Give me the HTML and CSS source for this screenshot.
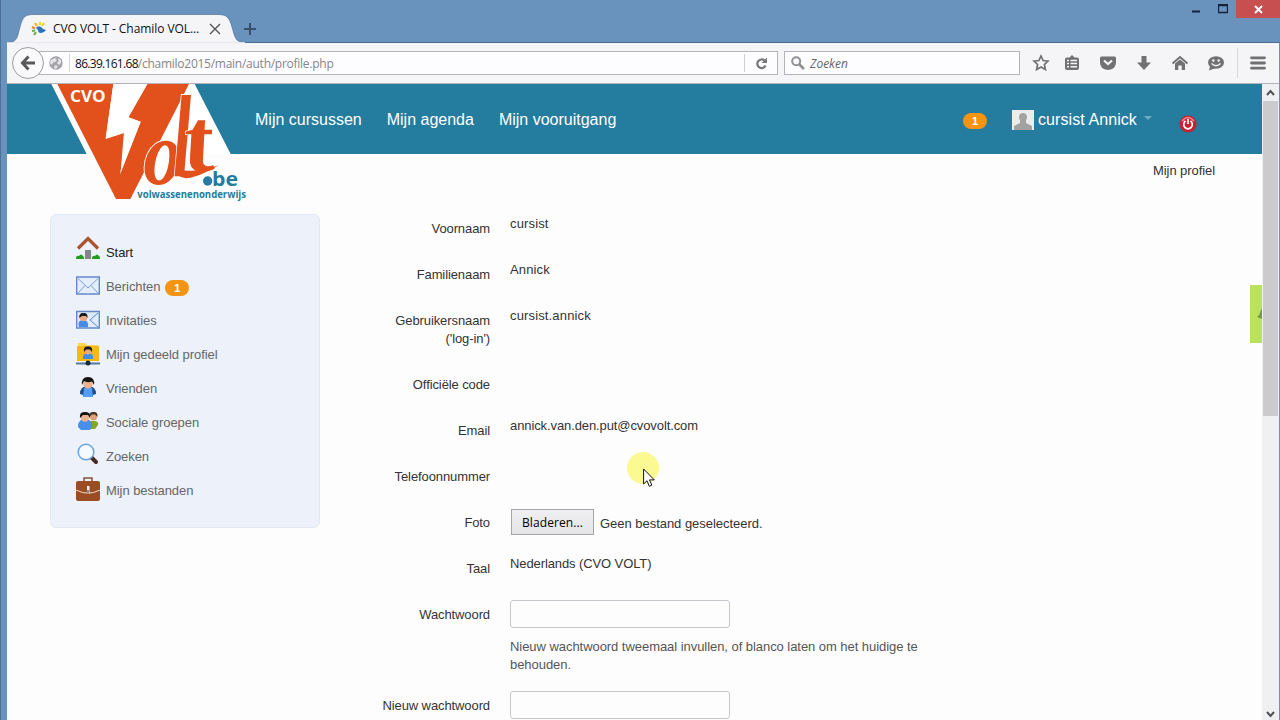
FILE: index.html
```html
<!DOCTYPE html>
<html lang="nl">
<head>
<meta charset="utf-8">
<title>CVO VOLT - Chamilo VOLT</title>
<link rel="stylesheet" href="styles.css">
</head>
<body>
<div class="window">
  <div class="titlebar">
    <svg class="tab-shape" width="240" height="30" viewBox="0 0 240 30"><path d="M0 29.500C11 29.500 10 24 13 14C16 3 18 1.500 28 1.500H210C220 1.500 222 4 225 14C228 24 228 29.500 238 29.500V30H0Z" fill="#f5f4f7" stroke="#4f7197" stroke-width=".7"/><path d="M0 30H238" stroke="#f5f4f7" stroke-width="1.500"/></svg>
    <div class="tab">
      <svg width="16" height="16" viewBox="0 0 16 16" fill="none" stroke-width="2.200"><path d="M5 7Q7 4 10 6Q11 8 15 9L13 11L10 12Q7 12 7 9Z" fill="#2875bd"/><path d="M1 6L4 7.500" stroke="#f08020"/><path d="M4 2L6 5" stroke="#f7b01e"/><path d="M9 1V4M13 2L11 5" stroke="#f7d21e"/><path d="M1 10L4 9.500M3 14L5 11" stroke="#65b244"/></svg>
      <span class="tab-title">CVO VOLT - Chamilo VOL...</span>
      <svg width="12" height="12" viewBox="0 0 12 12" stroke="#555" stroke-width="1.400"><path d="M1 1L11 11M11 1L1 11"/></svg>
    </div>
    <svg class="new-tab" width="12" height="12" viewBox="0 0 12 12" stroke="#38506c" stroke-width="2"><path d="M6 0V12M0 6H12"/></svg>
    <div class="win-controls">
      <svg width="9" height="12" viewBox="0 0 9 12"><path d="M0 8.500H8" stroke="#14233c" stroke-width="2"/></svg>
      <svg width="10" height="10" viewBox="0 0 10 10"><path d="M.5 .5H9.500V8.500H.5Z M0 1.500H10" fill="none" stroke="#14233c" stroke-width="1.300"/></svg>
      <div class="close"><svg width="9" height="9" viewBox="0 0 9 9" stroke="#fff" stroke-width="1.900"><path d="M1 1L8 8M8 1L1 8"/></svg></div>
    </div>
  </div>

  <div class="toolbar">
    <div class="back"><svg width="16" height="16" viewBox="0 0 16 16" fill="none" stroke="#59595c" stroke-width="3"><path d="M8.500 1.500L2.500 8L8.500 14.500M3 8H15"/></svg></div>
    <div class="url">
      <svg width="14" height="14" viewBox="0 0 14 14"><circle cx="7" cy="7" r="6.700" fill="#a4a4a8"/><path d="M2 4L6 2L8 4L6 6L4 6.500L3 9L1 7ZM9 2L12 4L12 7L10 9L8 7L9.500 5ZM6 9L9 10L7 13L5 12Z" fill="#e6e6e9"/></svg>
      <span class="address"><b>86.39.161.68</b>/chamilo2015/main/auth/profile.php</span>
      <span class="reload"><svg width="13" height="13" viewBox="0 0 13 13"><path d="M10.600 8.500A4.300 4.300 0 1 1 9.500 3.500" fill="none" stroke="#77777a" stroke-width="2.200"/><path d="M12 .5V6H6.500Z" fill="#77777a"/></svg></span>
    </div>
    <div class="search"><svg width="14" height="14" viewBox="0 0 14 14" fill="none" stroke="#929296" stroke-width="2"><circle cx="5.200" cy="5.200" r="4"/><path d="M8.200 8.200L13 13" stroke-width="2.700"/></svg><i>Zoeken</i></div>
    <div class="tools">
      <svg width="18" height="18" viewBox="0 0 18 18"><path d="M9 2L11.100 6.500L16 7.100L12.400 10.500L13.400 15.500L9 13L4.600 15.500L5.600 10.500L2 7.100L6.900 6.500Z" fill="none" stroke="#717174" stroke-width="1.700"/></svg>
      <svg class="clip" width="18" height="18" viewBox="0 0 18 18"><path d="M4 3.500H6.500L9 1L11.500 3.500H14Q16 3.500 16 5.500V14Q16 16 14 16H4Q2 16 2 14V5.500Q2 3.500 4 3.500Z" fill="#717174"/><path d="M4 6.500H6M7.500 6.500H14M4 9.500H6M7.500 9.500H14M4 12.800H6M7.500 12.800H14" stroke="#f5f4f7" stroke-width="1.600"/></svg>
      <svg width="18" height="18" viewBox="0 0 18 18"><path d="M2.500 2.500H15.500Q17 2.500 17 4V8Q17 15.500 9 16Q1 15.500 1 8V4Q1 2.500 2.500 2.500Z" fill="#717174"/><path d="M5 6.500L9 10L13 6.500" fill="none" stroke="#f5f4f7" stroke-width="2.200"/></svg>
      <svg width="18" height="18" viewBox="0 0 18 18"><path d="M6.500 2H11.500V8.500H16L9 16L2 8.500H6.500Z" fill="#717174"/></svg>
      <svg width="18" height="18" viewBox="0 0 18 18"><path d="M1.500 9.500L9 3L16.500 9.500" fill="none" stroke="#717174" stroke-width="2"/><path d="M4 9.500L9 5.500L14 9.500V16H10.700V11.500H7.300V16H4Z" fill="#717174"/></svg>
      <svg width="18" height="18" viewBox="0 0 18 18"><ellipse cx="9" cy="8.500" rx="8" ry="6.200" fill="#717174"/><path d="M3 12L2 16.500L9 14Z" fill="#717174"/><circle cx="6.300" cy="6.500" r="1.200" fill="#f5f4f7"/><circle cx="11.700" cy="6.500" r="1.200" fill="#f5f4f7"/><path d="M4.500 9.500Q9 14 13.500 9.500" fill="none" stroke="#f5f4f7" stroke-width="1.300"/></svg>
      <span class="menu"><svg width="16" height="14" viewBox="0 0 16 14" stroke="#717174" stroke-width="2.800" stroke-linecap="round"><path d="M1.500 1.800H14.500M1.500 7H14.500M1.500 12.200H14.500"/></svg></span>
    </div>
  </div>

  <div class="viewport">
    <div class="page">
      <header class="header">
        <svg class="logo" width="220" height="126" viewBox="0 12 660 378">
          <path d="M34 12H464L572 222H342L330 258L290 330H215L140 222Z" fill="#fff"/>
          <path d="M52 12H220L197 175L252 155L242 276L302 125L265 112L322 12H447L271 357H228Z" fill="#e2501b"/>
          <path d="M220 12H322L265 112L302 125L240 284L262 156L197 177Z" fill="#fff"/>
          <g class="script" fill="#e2501b" stroke="#fff" stroke-width="6" paint-order="stroke">
            <text transform="translate(308 313) skewX(-2) scale(.84 1)" font-size="275">o</text>
            <text class="stem" transform="translate(399 288) scale(.7 1)" font-size="330">l</text>
            <text transform="translate(444 272) skewX(8) scale(1.100 1)" font-size="270" stroke-width="4">t</text>
          </g>
          <path d="M406 262Q410 330 536 256Q500 270 455 272Q425 274 406 262Z" fill="#e2501b"/>
          <text class="brand" x="90" y="66" font-size="49" fill="#fff" textLength="107" lengthAdjust="spacingAndGlyphs">CVO</text>
          <circle cx="503" cy="303" r="14" fill="#247c9e"/>
          <text class="brand" x="516" y="319" font-size="57" fill="#247c9e" textLength="78" lengthAdjust="spacingAndGlyphs">be</text>
          <text class="brand" x="292" y="353" font-size="32" fill="#247c9e" textLength="326" lengthAdjust="spacingAndGlyphs">volwassenenonderwijs</text>
        </svg>
        <nav class="nav"><a>Mijn cursussen</a><a>Mijn agenda</a><a>Mijn vooruitgang</a></nav>
        <div class="account">
          <span class="badge">1</span>
          <svg class="avatar" width="22" height="20" viewBox="0 0 22 20"><path d="M0 0H22V20H0Z" fill="#ececec"/><path d="M11 3C15 3 16 7 14 10.500V13L20 16V20H2V16L8 13V10.500C6 7 7 3 11 3Z" fill="#a2a2a2"/></svg>
          <span class="user">cursist Annick</span>
          <i class="caret"></i>
          <svg class="power" width="18" height="18" viewBox="0 0 18 18"><circle cx="9" cy="9" r="8.500" fill="#c91e2d"/><path d="M3 6Q9-1 15 6" fill="none" stroke="#e88790" stroke-width="1.500"/><path d="M6.500 6A4.300 4.300 0 1 0 11.500 6M9 4V9" fill="none" stroke="#fff" stroke-width="1.700"/></svg>
        </div>
      </header>
      <div class="crumb">Mijn profiel</div>
      <div class="columns">
        <aside class="sidebar">
          <a class="active"><svg class="raise" width="24" height="24" viewBox="0 0 24 24"><path d="M9 14H15V23H9Z" fill="#85858a"/><path d="M2 12.500L12 2.500L22 12.500" fill="none" stroke="#a9532f" stroke-width="3.200"/><path d="M0 23Q0 19 3 20Q5 17 7 20Q8 20 8 23ZM16 23Q16 19 19 20Q21 17 23 20Q24 20 24 23Z" fill="#239c20"/></svg>Start</a>
          <a><svg width="24" height="24" viewBox="0 0 24 24"><path d="M.7 3H23.300V20H.7Z" fill="#e3edfc" stroke="#6489cb" stroke-width="1.400"/><path d="M2 4.500L12 14L22 4.500M2 19L9 11.500M22 19L15 11.500" fill="none" stroke="#7d9dd6"/></svg>Berichten<span class="badge">1</span></a>
          <a><svg width="24" height="24" viewBox="0 0 24 24"><path d="M.7 3.500H23.300V20H.7Z" fill="#dfeafa" stroke="#6489cb" stroke-width="1.400"/><path d="M22 5L14 12L22 19" fill="none" stroke="#5e88d0"/><path d="M3 19Q1 12 7 12Q13 12 12 19Z" fill="#438de8"/><circle cx="7.500" cy="9.500" r="3.800" fill="#e9a782"/><path d="M3.200 10Q3 4.500 7.500 5Q12 4.500 11.500 10L10 8H6Z" fill="#161c22"/></svg>Invitaties</a>
          <a><svg width="24" height="24" viewBox="0 0 24 24"><path d="M2 1H9L11 3H22V18H2Z" fill="#ffd65c"/><path d="M1 4H23V19H1Z" fill="#f8b814"/><path d="M7 17Q6 11 12 11Q18 11 17 17Z" fill="#438de8"/><circle cx="12" cy="9" r="3.500" fill="#e9a782"/><path d="M8 10Q7 4 12 4.500Q17 4 16 10L14 7.500H10Z" fill="#161c22"/><path d="M0 21.500H24" stroke="#52779a" stroke-width="2"/><circle cx="12" cy="21" r="2.500" fill="#162c40"/></svg>Mijn gedeeld profiel</a>
          <a><svg width="24" height="24" viewBox="0 0 24 24"><path d="M4 18Q4 10 12 10Q20 10 20 18L17 19V21H7V19Z" fill="#204e8a"/><path d="M7 21L8 12H16L17 21Z" fill="#529df6"/><circle cx="12" cy="8" r="4.600" fill="#efb18b"/><path d="M6 9Q5 1 12 1Q19 1 18 9L16 5.500Q11 7 8 5Z" fill="#151515"/></svg>Vrienden</a>
          <a><svg width="24" height="24" viewBox="0 0 24 24"><path d="M12 17L14 11H18Q23 11 22 15L19 19H13Z" fill="#86a52a"/><circle cx="17.500" cy="7" r="3.500" fill="#dfa077"/><path d="M13 7Q13 1.500 17.500 2Q22 1.500 21.500 7L19 4.500H16Z" fill="#4a351d"/><path d="M2 17Q2 9 9 9Q16 9 16 17L14 20H5Z" fill="#478fe9"/><circle cx="9" cy="7.500" r="4.200" fill="#efb18b"/><path d="M4 8Q3 1.500 9 2Q15 1.500 14 8L12 5H7Z" fill="#151515"/></svg>Sociale groepen</a>
          <a><svg class="lens" width="24" height="24" viewBox="0 0 24 24"><path d="M15.500 14.500L20 19" stroke="#492a21" stroke-width="4" stroke-linecap="round"/><circle cx="10" cy="9" r="7.800" fill="#f6faff" stroke="#69a5e2" stroke-width="1.500"/></svg>Zoeken</a>
          <a><svg class="case" width="24" height="26" viewBox="0 0 24 26"><path d="M8 6V2H16V6" fill="none" stroke="#855239" stroke-width="1.500"/><rect x="0" y="5" width="24" height="20" rx="2" fill="#9a4d22"/><path d="M0 14Q6 17 12 17Q18 17 24 14" fill="none" stroke="#e4bba0" stroke-width="1.300"/><path d="M11 10H13.500V18H11Z" fill="#eee"/><path d="M12 14V18" stroke="#333"/></svg>Mijn bestanden</a>
        </aside>
        <form class="form">
          <div class="row"><label>Voornaam</label><span>cursist</span></div>
          <div class="row"><label>Familienaam</label><span>Annick</span></div>
          <div class="row"><label>Gebruikersnaam<br>('log-in')</label><span>cursist.annick</span></div>
          <div class="row"><label>Officiële code</label></div>
          <div class="row"><label>Email</label><span class="tight">annick.van.den.put@cvovolt.com</span></div>
          <div class="row"><label>Telefoonnummer</label></div>
          <div class="row photo"><label>Foto</label><div class="file"><button type="button">Bladeren...</button><span>Geen bestand geselecteerd.</span></div></div>
          <div class="row"><label>Taal</label><span class="tight">Nederlands (CVO VOLT)</span></div>
          <div class="row pass"><label>Wachtwoord</label><div><input type="password"><p>Nieuw wachtwoord tweemaal invullen, of blanco laten om het huidige te behouden.</p></div></div>
          <div class="row"><label>Nieuw wachtwoord</label><input type="password"></div>
        </form>
      </div>
      <div class="side-tab"><svg width="5" height="12" viewBox="0 0 5 12"><path d="M5 0L2 7L0 9L5 11Z" fill="#77993f"/></svg></div>
    </div>
    <div class="scrollbar">
      <svg width="15" height="17" viewBox="0 0 15 17"><path d="M4 11L7.500 7L11 11" fill="none" stroke="#505055" stroke-width="2"/></svg>
      <div class="thumb"></div>
      <svg class="down" width="15" height="17" viewBox="0 0 15 17"><path d="M4 9L7.500 13L11 9" fill="none" stroke="#505055" stroke-width="2"/></svg>
    </div>
  </div>
  <div class="pointer"><svg width="12" height="20" viewBox="0 0 12 20"><path d="M.6 1V16L4 12.700L6.300 18.300L8.800 17.200L6.500 11.900H11.300Z" fill="#fff" stroke="#111"/></svg></div>
</div>
</body>
</html>
```
FILE: styles.css
```css
* { box-sizing: border-box; }
body { margin: 0; overflow: hidden; font: 13px/18px "Liberation Sans", Arial, sans-serif; color: #333; }
svg { display: block; flex: none; }
.window { width: 1280px; height: 720px; background: #6992bd; padding-left: 7px; display: flex; flex-direction: column; position: relative; box-shadow: inset 1px 0 #4c7098; }
.titlebar { height: 43px; flex: none; display: flex; position: relative; border-bottom: 1px solid #4c6d94; }
.tab-shape { position: absolute; left: 0; top: 13px; }
.tab { position: relative; margin: 14px 0 0 24px; width: 190px; height: 28px; display: flex; align-items: center; padding-top: 1px; font: 12px/16px "Open Sans", "Noto Sans", sans-serif; color: #111; }
.tab-title { margin-left: 6px; width: 156px; white-space: nowrap; letter-spacing: -.07px; }
.new-tab { margin: 23px 0 0 23px; }
.win-controls { margin-left: auto; display: flex; height: 18px; }
.win-controls > svg { margin: 4px 8px 0 0; }
.win-controls > svg:first-child { margin: 3px 17px 0 0; }
.close { width: 44px; height: 18px; background: #c84f50; display: flex; align-items: center; justify-content: center; }

.toolbar { height: 41px; flex: none; background: #f5f4f7; border-bottom: 1px solid #b4b1b8; display: flex; align-items: center; font: 12px/16px "Open Sans", "Noto Sans", sans-serif; margin-right: 1px; }
.back { width: 32px; height: 32px; margin-left: 5px; border: 1px solid #9e9da2; border-radius: 50%; background: #f9f8fa; display: flex; align-items: center; justify-content: center; position: relative; z-index: 1; }
.url { margin-left: -5px; width: 739px; height: 24px; border: 1px solid #b4b3b9; background: #fdfcfe; display: flex; align-items: center; padding-left: 9px; }
.address { margin-left: 6px; border-left: 1px solid #d4d3d7; padding: 2px 0 0 5px; color: #85858a; letter-spacing: -.26px; }
.address b { color: #111; font-weight: 400; letter-spacing: -.7px; }
.reload { margin-left: auto; width: 33px; height: 18px; border-left: 1px solid #cfced3; display: flex; align-items: center; padding-left: 10px; }
.search { margin-left: 6px; width: 236px; height: 24px; border: 1px solid #b4b3b9; background: #fdfcfe; display: flex; align-items: center; padding-left: 6px; color: #66666a; }
.search i { margin-left: 5px; padding-top: 2px; }
.tools { margin-left: 12px; display: flex; align-items: center; gap: 18px; flex: 1; }
.tools .clip { margin-left: -5px; }
.menu { border-left: 1px solid #d8d7dc; height: 30px; padding-left: 12px; margin-left: -6px; display: flex; align-items: center; }

.viewport { flex: 1; display: flex; min-height: 0; }
.page { width: 1255px; background: #fefdfe; position: relative; overflow: hidden; }
.header { height: 70px; background: #247c9e; display: flex; padding-left: 33px; color: #fff; font-size: 16px; line-height: 20px; }
.logo { position: relative; }
.script { font-family: "Liberation Serif", serif; font-style: italic; font-weight: 700; }
.stem { font-family: Lato, sans-serif; }
.brand { font-family: "Open Sans", sans-serif; font-weight: 700; }
.nav { display: flex; gap: 25px; margin: 26px 0 0 -5px; }
.account { margin-left: auto; padding: 26px 65px 0 0; display: flex; }
.badge { width: 24px; height: 16px; border-radius: 8px; background: #f49410; color: #fff; font-size: 11px; line-height: 16px; font-weight: 700; text-align: center; }
.account .badge { margin: 3px 25px 0 0; }
.avatar { margin-right: 4px; }
.user { width: 99px; white-space: nowrap; letter-spacing: .08px; }
.caret { margin: 6px 27px 0 7px; height: 0; border: 4px solid transparent; border-top-color: #72aabf; border-bottom: 0; }
.power { margin-top: 5px; }
.crumb { height: 60px; padding: 8px 47px 0 0; text-align: right; letter-spacing: -.07px; }
.columns { display: flex; padding-left: 43px; align-items: flex-start; }
.sidebar { width: 270px; height: 314px; background: #edf1fa; border: 1px solid #e2e9f5; border-radius: 6px; padding: 20px 25px; display: flex; flex-direction: column; color: #666; letter-spacing: -.06px; }
.sidebar a { height: 34px; display: flex; align-items: center; gap: 6px; white-space: nowrap; padding-top: 2px; }
.sidebar a > svg { margin-top: -2px; }
.sidebar a > .raise { margin-top: -10px; }
.sidebar a > .lens { margin-top: -5px; }
.sidebar a > .case { margin-top: -4px; }
.sidebar .badge { margin: 2px 0 0 -1px; }
.sidebar .active { color: #222; }
.form { margin-left: 20px; width: 600px; }
.row { display: grid; grid-template-columns: 150px 410px; column-gap: 20px; align-items: start; margin-bottom: 23px; }
.row label { padding-top: 6px; margin-bottom: -1px; text-align: right; white-space: nowrap; letter-spacing: -.1px; }
.row > span { padding-top: 1px; letter-spacing: .15px; }
.row > .tight { letter-spacing: -.1px; }
.photo { height: 23px; }
.file { display: flex; align-items: center; height: 28px; gap: 6px; padding-left: 1px; }
.file span { white-space: nowrap; padding-top: 3px; letter-spacing: -.03px; }
button { width: 83px; height: 26px; margin-top: -1px; padding: 3px 0 0; border: 1px solid #a5a4a8; background: linear-gradient(#f0eff1, #e4e3e6); font: 12px/18px "Open Sans", "Noto Sans", sans-serif; letter-spacing: .1px; color: #000; }
input { display: block; width: 220px; height: 28px; border: 1px solid #c8c6cd; border-radius: 3px; background: #fefdfe; padding: 0; }
.row p { margin: 10px 0 -1px; color: #555; letter-spacing: -.05px; }
.pass { margin-bottom: 18px; }
.side-tab { position: absolute; right: 0; top: 201px; width: 12px; height: 58px; background: #b9e35d; display: flex; align-items: center; justify-content: flex-end; }
.scrollbar { width: 17px; background: #f0eff1; padding-left: 1px; display: flex; flex-direction: column; }
.thumb { width: 15px; height: 315px; background: #cccacd; }
.down { margin-top: auto; }
.pointer { position: absolute; left: 627px; top: 452px; width: 32px; height: 32px; border-radius: 50%; background: #fbf991; padding: 16px 0 0 16px; }
```
